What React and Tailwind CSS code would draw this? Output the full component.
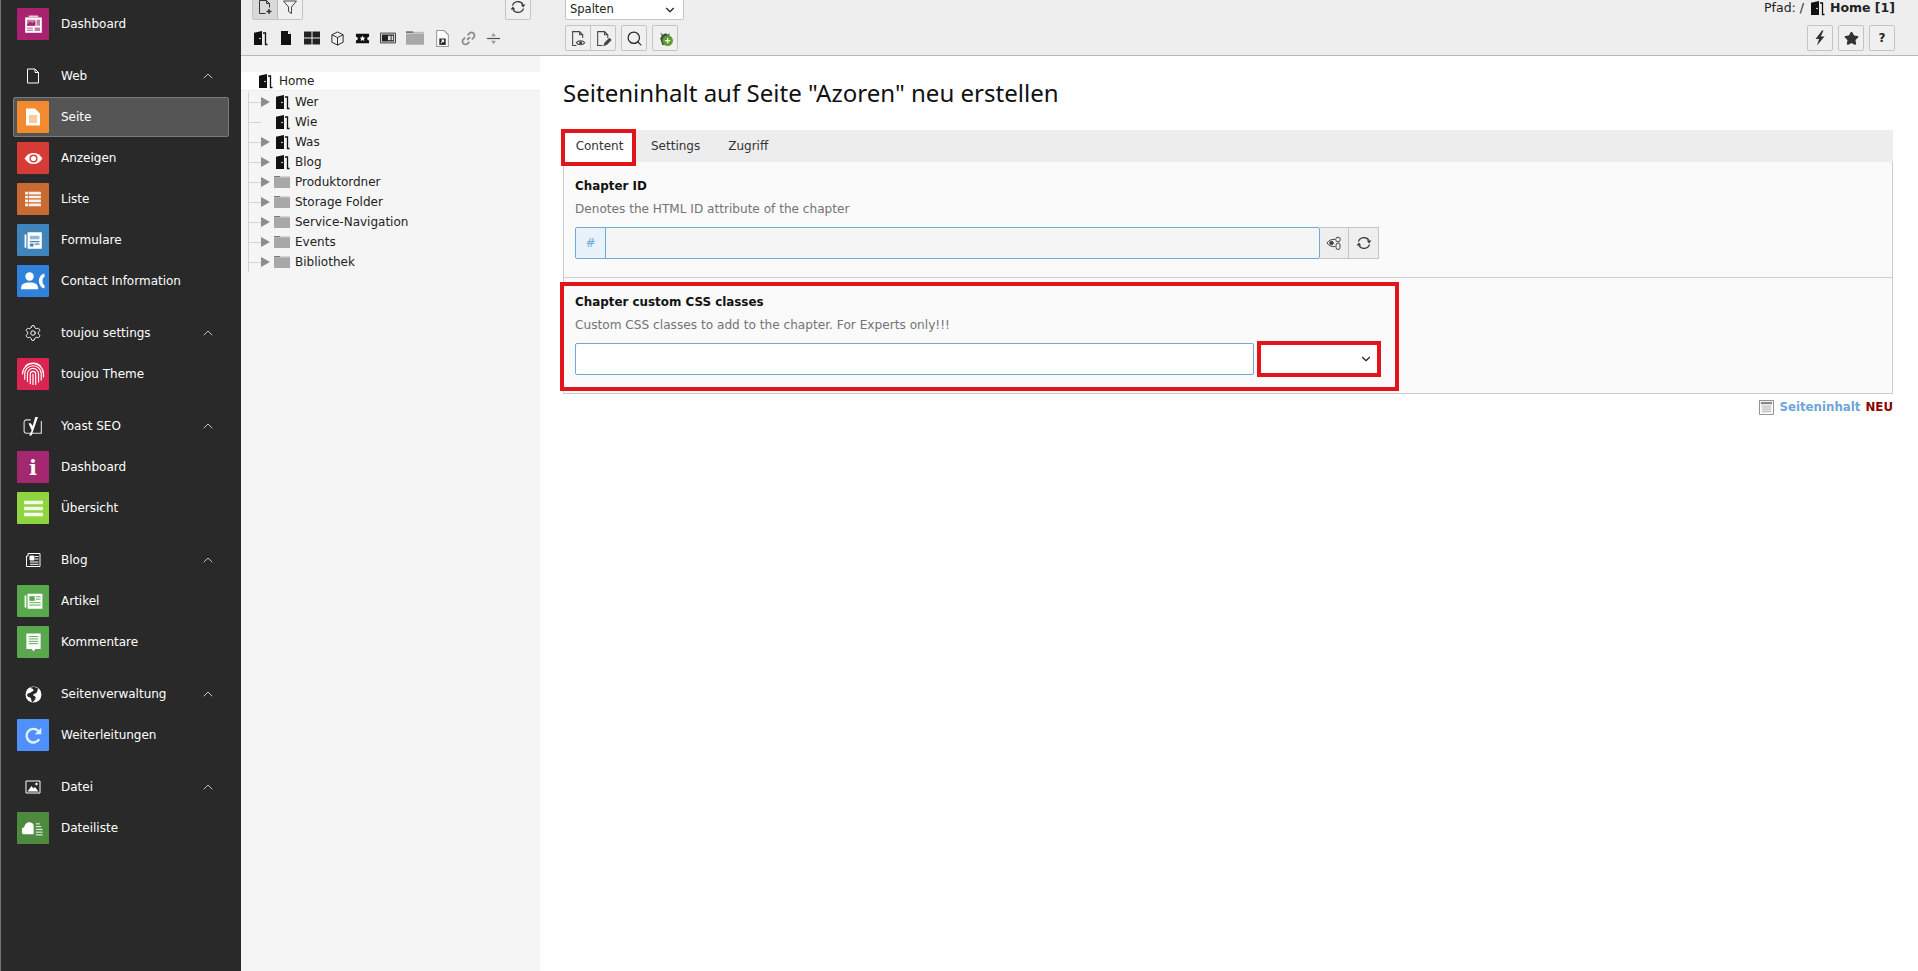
import { ChevronDown, ChevronUp, Search, Settings, Star } from 'lucide-react';

const dejavu = 'font-["DejaVu_Sans",sans-serif]';

const Door = ({ className = 'h-4 w-4', color = '#111' }) => (
  <svg viewBox="0 0 16 16" className={className}>
    <path d="M0.500 15h1.500V2.800L10 1v14H0.500z" fill={color} />
    <circle cx="8" cy="8.500" r="0.800" fill="#fff" />
    <path d="M11 3h2.500v11.500H15.500" fill="none" stroke={color} strokeWidth="1.300" />
  </svg>
);

const Folder = ({ className = 'h-4 w-4' }) => (
  <svg viewBox="0 0 16 16" className={className}>
    <path d="M0 2h6l1 1.500H0z" fill="#777" />
    <path d="M0 4h16v10H0z" fill="#a8a8a8" />
    <path d="M7 2.500h9V4H7z" fill="#bbb" />
  </svg>
);

const Refresh = ({ className = 'h-[16px] w-[16px]' }) => (
  <svg viewBox="0 0 16 16" className={className}>
    <path d="M2.500 6.500A5.800 5.800 0 0 1 13 5.500M13.500 9.500A5.800 5.800 0 0 1 3 10.500" fill="none" stroke="#333" strokeWidth="1.200" />
    <path d="M10.800 5.500h4.600l-2.300 3zM0.600 10.500h4.600l-2.300-3z" fill="#333" />
  </svg>
);

const moduleIcons = {
  dashboard: (
    <svg viewBox="0 0 16 16" className="h-[19px] w-[19px]">
      <path d="M1 2h14v13H1z" fill="#fff" />
      <path d="M4 0.500h8v1H4z" fill="#fff" />
      <path d="M2.500 4h7v5h-7z" fill="#c77aa8" />
      <path d="M2.500 8l2.500-2.500 2 1.500 2.500-2v4h-7z" fill="#a8226f" />
      <path d="M10.500 4h3v5h-3zM2.500 10.500h5v1h-5zM2.500 12.500h5v1h-5zM9 10.500h4.500v3H9z" fill="#c77aa8" />
    </svg>
  ),
  page: (
    <svg viewBox="0 0 16 18" className="h-[18px] w-[16px]">
      <path d="M1 0.500h9l5 5v12H1z" fill="#fff" />
      <path d="M4 8h8M4 10h8M4 12h8M4 14h8" stroke="#f38a2f" strokeWidth="0.900" />
    </svg>
  ),
  eye: (
    <svg viewBox="0 0 16 16" className="h-[19px] w-[19px]">
      <path d="M0.500 8C2.500 4.800 5 3.300 8 3.300S13.500 4.800 15.500 8C13.500 11.200 11 12.700 8 12.700S2.500 11.200 0.500 8z" fill="#fff" />
      <circle cx="8" cy="8" r="3.400" fill="#d63c35" />
      <circle cx="8" cy="8" r="2.200" fill="#fff" />
    </svg>
  ),
  list: (
    <svg viewBox="0 0 16 16" className="h-[18px] w-[18px]">
      <path d="M1 1.500h14v2.400H1zM1 5h14v2.400H1zM1 8.500h14v2.400H1zM1 12h14v2.400H1z" fill="#fff" fillOpacity="0.900" />
      <path d="M4 1.500v13" stroke="#ca6a33" strokeWidth="0.600" />
    </svg>
  ),
  form: (
    <svg viewBox="0 0 16 16" className="h-[19px] w-[19px]">
      <path d="M0.500 3h1.500v11H0.500zM3 1h12v14H3z" fill="#fff" />
      <path d="M5 4h8v3H5z" fill="#8fb6d6" />
      <path d="M5 8.500h8v1H5zM5 10.500h3v2.500H5zM9 10.500h4v1H9z" fill="#3f84bb" />
    </svg>
  ),
  contact: (
    <svg viewBox="0 0 16 16" className="h-[24px] w-[24px]">
      <circle cx="5.700" cy="5" r="2.800" fill="#fff" />
      <path d="M0 13c0-3 2.300-4 5.700-4s5.700 1 5.700 4v.5H0z" fill="#fff" />
      <path d="M15.500 3C13 3.500 12 6 12 8s1 4.500 3.500 5l.3-2c-1-.3-1.500-1.800-1.500-3s.5-2.700 1.500-3z" fill="#fff" />
    </svg>
  ),
  finger: (
    <svg viewBox="0 0 16 16" className="h-[24px] w-[24px]" fill="none" stroke="#fff" strokeWidth="0.800" strokeLinecap="round">
      <path d="M3 2.800a7 7 0 0 1 10 0" />
      <path d="M1 8a7 7 0 0 1 14 0v2" />
      <path d="M2.500 11.500V8a5.500 5.500 0 0 1 11 0v4" />
      <path d="M4.300 13V8a3.700 3.700 0 0 1 7.400 0v5.500" />
      <path d="M6.200 14.500V8a1.800 1.800 0 0 1 3.600 0v7" />
      <path d="M8 15V8" />
    </svg>
  ),
  info: <span className='text-[21px] font-bold leading-none text-white font-["DejaVu_Serif",serif]'>i</span>,
  lines: (
    <svg viewBox="0 0 16 16" className="h-[19px] w-[19px]">
      <path d="M0 1.500h16v3H0zM0 6.500h16v3H0zM0 11.500h16v3H0z" fill="#fff" fillOpacity="0.900" />
    </svg>
  ),
  article: (
    <svg viewBox="0 0 16 16" className="h-[19px] w-[19px]">
      <path d="M0.500 3h1.500v10H0.500zM3 1.500h12.500v12.500H3z" fill="#fff" />
      <path d="M4.500 3.500h4.500v4H4.500z" fill="#5aa84e" />
      <path d="M10 4h4M10 6h4M4.500 9h9.500M4.500 11h9.500" stroke="#5aa84e" strokeWidth="0.800" />
    </svg>
  ),
  comment: (
    <svg viewBox="0 0 16 16" className="h-[19px] w-[19px]">
      <path d="M2 0.500h12v13H9.500L8 15.500 6.500 13.500H2z" fill="#fff" />
      <path d="M4 3h8M4 5h8M4 7h8M4 9h8" stroke="#5aa84e" strokeWidth="0.800" />
    </svg>
  ),
  redirect: (
    <svg viewBox="0 0 16 16" className="h-[19px] w-[19px]" fill="none">
      <path d="M12.800 11A5.700 5.700 0 1 1 12 4.200" stroke="#e4efff" strokeWidth="2" />
      <path d="M14.500 1.500V7H9z" fill="#e4efff" />
    </svg>
  ),
  files: (
    <svg viewBox="0 0 16 16" className="h-[22px] w-[22px]">
      <path d="M1 12a2.500 2.500 0 0 1 .5-4.800C2 4.500 4 3 6 3.500 7.500 3.500 8.500 4.500 8.500 6v6z" fill="#fff" transform="translate(0,.5)" />
      <path d="M10 5h3M10 7h4M10 9h5M10 11h5M10 13h5" stroke="#fff" strokeWidth="0.700" />
    </svg>
  ),
};

const groupIcons = {
  web: (
    <svg viewBox="0 0 16 16" className="h-[16px] w-[16px]" fill="none" stroke="#fff" strokeWidth="1">
      <path d="M2.500 1h7.500l3.500 3.500v10.500h-11z" />
      <path d="M10 1v3.500h3.500" />
    </svg>
  ),
  settings: <Settings className="h-[18px] w-[18px]" color="#fff" strokeWidth={1.3} />,
  yoast: (
    <svg viewBox="0 0 18 18" className="h-[20px] w-[20px]" fill="none">
      <path d="M7 3.500H3a2 2 0 0 0-2 2v8a2 2 0 0 0 2 2h13.500V4.500" stroke="#ddd" strokeWidth="1" />
      <path d="M5 6.500l2.800 6.500-2.300 4.500h2.200L13.500 1H11l-2.300 8L7 6.500z" fill="#fff" />
    </svg>
  ),
  blog: (
    <svg viewBox="0 0 16 16" className="h-[16px] w-[16px]" fill="none" stroke="#fff">
      <path d="M3 1.500h12v13H1.500V4H3z" />
      <path d="M5 4h4v4H5z" fill="#fff" />
      <path d="M10 4.500h3.500M10 7h3.500M5 10h8.500M5 12.300h8.500" />
    </svg>
  ),
  globe: (
    <svg viewBox="0 0 16 16" className="h-[17px] w-[17px]">
      <circle cx="8" cy="8" r="7.500" fill="#fff" />
      <path d="M5 1.500c1 1 3 1 3 2.500s-2 1-2.500 2S2 6 2 8.500 5 10 5.500 11.500 6 15 7 15 10 12.500 10 11 8 9 7.500 8.500 10 7 11 6s.5-3 1.500-3.500C10 .5 7 .5 5 1.500z" fill="#292929" />
    </svg>
  ),
  image: (
    <svg viewBox="0 0 16 16" className="h-[16px] w-[16px]">
      <path d="M1 2h14v12H1z" fill="none" stroke="#fff" />
      <path d="M2.500 12.500L6.500 7l2 2.500 1.500-1.500 3.500 4.500z" fill="#fff" />
      <circle cx="11.500" cy="5" r="1.200" fill="#fff" />
    </svg>
  ),
};

const menu = [
  { items: [{ label: 'Dashboard', icon: 'dashboard', color: 'bg-[#a8226f]' }] },
  {
    label: 'Web',
    icon: 'web',
    items: [
      { label: 'Seite', icon: 'page', color: 'bg-[#f38a2f]', active: true },
      { label: 'Anzeigen', icon: 'eye', color: 'bg-[#d63c35]' },
      { label: 'Liste', icon: 'list', color: 'bg-[#ca6a33]' },
      { label: 'Formulare', icon: 'form', color: 'bg-[#3f84bb]' },
      { label: 'Contact Information', icon: 'contact', color: 'bg-[#2f82dc]' },
    ],
  },
  {
    label: 'toujou settings',
    icon: 'settings',
    items: [{ label: 'toujou Theme', icon: 'finger', color: 'bg-[#dc2450]' }],
  },
  {
    label: 'Yoast SEO',
    icon: 'yoast',
    items: [
      { label: 'Dashboard', icon: 'info', color: 'bg-[#a4286f]' },
      { label: 'Übersicht', icon: 'lines', color: 'bg-[#8fd53f]' },
    ],
  },
  {
    label: 'Blog',
    icon: 'blog',
    items: [
      { label: 'Artikel', icon: 'article', color: 'bg-[#5aa84e]' },
      { label: 'Kommentare', icon: 'comment', color: 'bg-[#5aa84e]' },
    ],
  },
  {
    label: 'Seitenverwaltung',
    icon: 'globe',
    items: [{ label: 'Weiterleitungen', icon: 'redirect', color: 'bg-[#4d90fe]' }],
  },
  {
    label: 'Datei',
    icon: 'image',
    items: [{ label: 'Dateiliste', icon: 'files', color: 'bg-[#4e8a3e]' }],
  },
];

function Sidebar() {
  return (
    <aside className={`flex h-full w-[241px] shrink-0 flex-col gap-[11px] border-l border-[#777] bg-[#292929] pt-[3.5px] text-[12px] text-white ${dejavu}`}>
      {menu.map((group, i) => (
        <div key={i}>
          {group.label && (
            <div className="flex h-[41px] items-center">
              <span className="flex w-[60px] shrink-0 justify-center pl-[4px]">{groupIcons[group.icon]}</span>
              <span className="flex-1">{group.label}</span>
              <ChevronUp className="mr-[25px] h-[16px] w-[16px]" color="#ccc" strokeWidth={1.4} />
            </div>
          )}
          {group.items.map((item) => (
            <div key={item.label} className="flex h-[41px] items-center pl-[12px] pr-[12px]">
              <div className={`flex h-[40px] w-full items-center rounded-[2px] border pl-[3px] ${item.active ? 'border-[#7a7a7a] bg-[#555]' : 'border-transparent'}`}>
                <span className={`mr-[12px] flex h-[32px] w-[32px] items-center justify-center rounded-[1px] ${item.color}`}>
                  {moduleIcons[item.icon]}
                </span>
                {item.label}
              </div>
            </div>
          ))}
        </div>
      ))}
    </aside>
  );
}

const treeToolbarIcons = [
  <Door key="door" className="h-[16px] w-[16px]" />,
  <svg key="page" viewBox="0 0 16 16" className="h-[16px] w-[16px]"><path d="M3 1h7l3 3v11H3z" fill="#111" /><path d="M10 1v3h3" fill="#fff" /></svg>,
  <svg key="grid" viewBox="0 0 16 16" className="h-[16px] w-[16px]"><path d="M0 1.500h7.500v6H0zM8.500 1.500H16v6H8.500zM0 8.500h7.500v6H0zM8.500 8.500H16v6H8.500z" fill="#222" /></svg>,
  <svg key="cube" viewBox="0 0 16 16" className="h-[15px] w-[15px]" fill="none" stroke="#222"><path d="M8 1l6 3v8l-6 3-6-3V4zM2 4l6 3 6-3M8 7v8" /></svg>,
  <svg key="ticket" viewBox="0 0 16 16" className="h-[15px] w-[15px]"><path d="M1 3h14v3a2 2 0 0 0 0 4v3H1v-3a2 2 0 0 0 0-4z" fill="#111" /><path d="M8 5l1 2 2 .2-1.500 1.400.4 2L8 9.600l-1.900 1 .4-2L5 7.200 7 7z" fill="#fff" /></svg>,
  <svg key="list" viewBox="0 0 18 16" className="h-[16px] w-[16px]"><path d="M0.500 2.500h17v11H0.500z" fill="#fff" stroke="#222" /><path d="M2 4h14v8H2z" fill="#222" /><path d="M9 5.500h3v5H9zM13 5.500h2v5h-2z" fill="#ddd" /></svg>,
  <Folder key="folder" className="h-[18px] w-[18px]" />,
  <svg key="shortcut" viewBox="0 0 16 16" className="h-[17px] w-[17px]"><path d="M2.500 0.500h7l4 4v11h-11z" fill="#fff" stroke="#999" /><path d="M5 8h6v6H5z" fill="#222" /><path d="M6.500 12.500l2-2.500M7 9.500h2v2" stroke="#fff" fill="none" /></svg>,
  <svg key="link" viewBox="0 0 16 16" className="h-[15px] w-[15px]" fill="none" stroke="#888" strokeWidth="1.800"><path d="M6.500 9.500l3-3M7 4.500l2-2a2.600 2.600 0 0 1 4.500 4.500l-2 2M9 11.500l-2 2A2.600 2.600 0 0 1 2.500 9l2-2" /></svg>,
  <svg key="divider" viewBox="0 0 16 16" className="h-[15px] w-[15px]"><path d="M1 8h14" stroke="#555" strokeWidth="1.300" /><path d="M8 2l2.500 3.500h-5zM8 14l2.500-3.500h-5z" fill="#999" /></svg>,
];

const treeRows = [
  { label: 'Wer', kind: 'door', arrow: true },
  { label: 'Wie', kind: 'door', arrow: false },
  { label: 'Was', kind: 'door', arrow: true },
  { label: 'Blog', kind: 'door', arrow: true },
  { label: 'Produktordner', kind: 'folder', arrow: true },
  { label: 'Storage Folder', kind: 'folder', arrow: true },
  { label: 'Service-Navigation', kind: 'folder', arrow: true },
  { label: 'Events', kind: 'folder', arrow: true },
  { label: 'Bibliothek', kind: 'folder', arrow: true },
];

function Tree() {
  return (
    <section className={`flex h-full w-[299px] shrink-0 flex-col bg-[#f5f5f5] text-[12px] text-[#222] ${dejavu}`}>
      <div className="h-[56px] shrink-0 border-b border-[#b8b8b8] bg-[#eeeeee] pl-[11px] pr-[9px]">
        <div className="flex h-[20px] items-end justify-between">
          <div className="flex h-[26px] overflow-hidden rounded-[2px] border border-[#c4c4c4]">
            <span className="flex w-[25px] items-center justify-center border-r border-[#bbb] bg-[#d9d9d9]">
              <svg viewBox="0 0 16 16" className="h-[16px] w-[16px]" fill="none" stroke="#333"><path d="M8.500 14.500h-6v-13h7l3 3v4M9.500 1.500v3h3" /><path d="M12 10v5M9.500 12.500h5" strokeWidth="1.500" /></svg>
            </span>
            <span className="flex w-[24px] items-center justify-center bg-[#f0f0f0]">
              <svg viewBox="0 0 16 16" className="h-[16px] w-[16px]" fill="none" stroke="#444"><path d="M1.500 2h13L9.500 8v6.500l-3-2V8z" /></svg>
            </span>
          </div>
          <span className="flex h-[26px] w-[26px] items-center justify-center rounded-[2px] border border-[#c4c4c4] bg-[#f0f0f0]">
            <Refresh />
          </span>
        </div>
        <div className="mt-[9px] flex h-[18px] items-center gap-[10px]">
          {treeToolbarIcons.map((icon) => icon)}
        </div>
      </div>
      <div className="pt-[16px]">
        <div className="flex h-[19px] items-center gap-[6px] border-b border-[#ececec] bg-white pl-[16px]">
          <Door className="h-[16px] w-[16px]" />
          Home
        </div>
        <div className="ml-[7px] mt-[1px] mb-[8px] border-l border-[#d4d4d4]">
          {treeRows.map((row) => (
            <div key={row.label} className="flex h-[20px] items-center">
              <span className="h-px w-[12px] bg-[#d4d4d4]" />
              <span className="flex w-[13px] shrink-0 items-center">
                {row.arrow && (
                  <svg viewBox="0 0 9 10" className="h-[10px] w-[9px]"><path d="M0 0l9 5-9 5z" fill="#8c8c8c" /></svg>
                )}
              </span>
              {row.kind === 'door' ? <Door className="h-[16px] w-[16px]" /> : <Folder className="h-[16px] w-[16px]" />}
              <span className="ml-[5px]">{row.label}</span>
            </div>
          ))}
        </div>
      </div>
    </section>
  );
}

const ToolButton = ({ children, className = '' }) => (
  <span className={`flex h-[26px] w-[26px] items-center justify-center rounded-[2px] border border-[#c4c4c4] bg-[#f0f0f0] ${className}`}>
    {children}
  </span>
);

function DocHeader() {
  return (
    <header className={`flex h-[56px] shrink-0 justify-between border-b border-[#b8b8b8] bg-[#eeeeee] pl-[25px] pr-[23px] text-[12px] text-[#222] ${dejavu}`}>
      <div>
        <div className="flex h-[20px] w-[119px] items-center justify-between rounded-b-[2px] border border-t-0 border-[#c4c4c4] bg-white pl-[4px] pr-[6px] text-[11.5px]">
          Spalten
          <ChevronDown className="h-[14px] w-[14px]" color="#222" strokeWidth={2} />
        </div>
        <div className="mt-[5px] flex gap-[5px]">
          <div className="flex">
            <ToolButton className="rounded-r-none">
              <svg viewBox="0 0 16 16" className="h-[17px] w-[17px]" fill="none" stroke="#444"><path d="M6 14.500H2.500v-13h6.500l3 3v3M9 1.500v3h3" /><path d="M6 12c1.500-2.500 6-2.500 8 0-2 2.500-6.500 2.500-8 0z" /><circle cx="10" cy="12" r="1" fill="#444" /></svg>
            </ToolButton>
            <ToolButton className="-ml-px rounded-l-none">
              <svg viewBox="0 0 16 16" className="h-[17px] w-[17px]" fill="none" stroke="#444"><path d="M7 14.500H2.500v-13h6.500l3 3v3M9 1.500v3h3" /><path d="M8.500 14.500l1-2.500 4-4 1.500 1.500-4 4z" fill="#444" /></svg>
            </ToolButton>
          </div>
          <ToolButton>
            <Search className="h-[17px] w-[17px]" color="#222" strokeWidth={1.7} />
          </ToolButton>
          <ToolButton>
            <svg viewBox="0 0 16 16" className="h-[17px] w-[17px]"><path d="M3 2l2.500 2.500L8 3l2.500 1.500L12 2.500l-.5 3 1 2-2 6.500H5L3 8l1.500-2.500z" fill="#3f4a3a" /><circle cx="10" cy="10" r="5" fill="#5c9e31" /><path d="M10 7.500v5M7.500 10h5" stroke="#fff" strokeWidth="1.200" /></svg>
          </ToolButton>
        </div>
      </div>
      <div className="flex flex-col items-end">
        <div className="flex h-[16px] items-center gap-[5px] text-[12.5px]">
          Pfad: /
          <Door className="h-[16px] w-[16px]" />
          <b>Home [1]</b>
        </div>
        <div className="mt-[9px] flex gap-[5px]">
          <ToolButton>
            <svg viewBox="0 0 16 16" className="h-[16px] w-[16px]"><path d="M10 0.500L3.500 9H7L5 15.500 12.500 6.500H8.800L11.500 0.500z" fill="#333" /></svg>
          </ToolButton>
          <ToolButton><Star className="h-[15px] w-[15px]" fill="#333" color="#333" /></ToolButton>
          <ToolButton><b className="text-[12px]">?</b></ToolButton>
        </div>
      </div>
    </header>
  );
}

function Content() {
  return (
    <main className="relative min-h-0 flex-1 bg-white pl-[23px] pr-[25px] pt-[20px]">
      <h1 className='text-[24.05px] font-normal leading-[33px] text-[#111] font-["Noto_Sans",sans-serif]'>
        Seiteninhalt auf Seite "Azoren" neu erstellen
      </h1>
      <div className={`mt-[21px] text-[12px] ${dejavu}`}>
        <div className="flex h-[32px] items-center bg-[#ededed] text-[#333]">
          <span className="flex h-full w-[73px] items-center justify-center bg-white">Content</span>
          <span className="ml-[15px]">Settings</span>
          <span className="ml-[28px]">Zugriff</span>
        </div>
        <div className="border border-t-0 border-[#ccc] bg-[#fafafa]">
          <div className="h-[116px] border-b border-[#ccc] px-[11px] pt-[16px]">
            <div className="text-[11.9px] font-bold leading-[16px] text-[#111]">Chapter ID</div>
            <div className="mt-[7px] text-[12.1px] leading-[16px] text-[#737373]">Denotes the HTML ID attribute of the chapter</div>
            <div className="mt-[10px] flex h-[32px] w-[804px]">
              <div className="flex w-[745px] overflow-hidden rounded-[2px] border border-[#6da9db] bg-[#f5f5f5]">
                <span className="flex w-[30px] items-center justify-center border-r border-[#6da9db] bg-[#e9f1fa] text-[#6da9db]">#</span>
              </div>
              <span className="flex w-[29px] items-center justify-center border border-l-0 border-[#c4c4c4] bg-[#eeeeee]">
                <svg viewBox="0 0 16 16" className="h-[16px] w-[16px]" fill="none" stroke="#444"><path d="M1 8c2-3 5-4 8-3.500M9 11.500C6 12 3 11 1 8" /><circle cx="5.500" cy="8" r="1.800" fill="#444" /><circle cx="12" cy="4.500" r="2.300" /><rect x="10" y="8" width="4" height="6.500" rx="2" /></svg>
              </span>
              <span className="flex w-[30px] items-center justify-center border border-l-0 border-[#c4c4c4] bg-[#eeeeee]">
                <Refresh />
              </span>
            </div>
          </div>
          <div className="h-[115px] px-[11px] pt-[16px]">
            <div className="text-[11.9px] font-bold leading-[16px] text-[#111]">Chapter custom CSS classes</div>
            <div className="mt-[7px] text-[12.15px] leading-[16px] text-[#737373]">Custom CSS classes to add to the chapter. For Experts only!!!</div>
            <div className="mt-[10px] flex h-[32px] w-[807px] items-center justify-between">
              <div className="h-full w-[679px] rounded-[2px] border border-[#6da9db] bg-white" />
              <div className="flex h-full w-[118px] items-center justify-end bg-white pr-[9px]">
                <ChevronDown className="h-[14px] w-[14px]" color="#222" strokeWidth={2} />
              </div>
            </div>
          </div>
        </div>
        <div className="mt-[5px] flex items-center justify-end gap-[5px] text-[11.8px]">
          <svg viewBox="0 0 16 16" className="h-[15px] w-[15px]"><path d="M0.500 0.500h15v15H0.500z" fill="#fff" stroke="#888" /><path d="M2 2h12v2.500H2z" fill="#888" /><path d="M3 6.500h10M3 8.500h10M3 10.500h10M3 12.500h10" stroke="#aaa" /></svg>
          <b className="text-[#6da6d8]">Seiteninhalt</b>
          <b className="text-[#8b0000]">NEU</b>
        </div>
      </div>
      {/* red annotation boxes from the screenshot */}
      <div className="absolute left-[21px] top-[73px] h-[37px] w-[75px] border-4 border-[#e3141a]" />
      <div className="absolute left-[20px] top-[226px] h-[109px] w-[839px] border-4 border-[#e3141a]" />
      <div className="absolute left-[717px] top-[285px] h-[36px] w-[124px] border-4 border-[#e3141a]" />
    </main>
  );
}

export default function App() {
  return (
    <div className="flex h-screen w-screen overflow-hidden bg-white">
      <Sidebar />
      <Tree />
      <div className="flex min-w-0 flex-1 flex-col">
        <DocHeader />
        <Content />
      </div>
    </div>
  );
}
